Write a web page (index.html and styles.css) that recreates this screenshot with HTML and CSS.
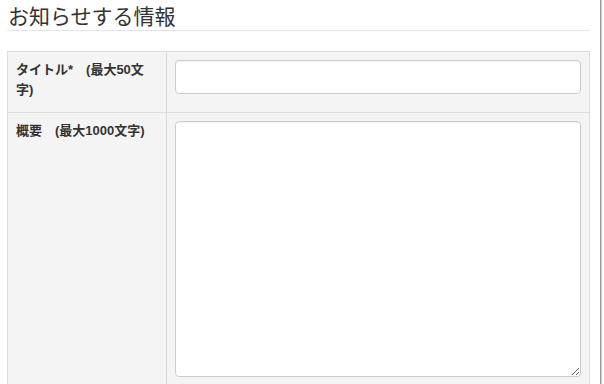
FILE: index.html
```html
<!DOCTYPE html>
<html lang="ja">
<head>
    <meta charset="UTF-8">
    <meta name="viewport" content="width=device-width, initial-scale=1.0">
    <title>お知らせする情報</title>
    <link rel="stylesheet" href="styles.css">
</head>
<body>

    <div class="page">
        <form class="notice-form">
            <fieldset>
                <legend>お知らせする情報</legend>

                <table class="form-table">
                    <tr>
                        <th>タイトル*　(最大50文字)</th>
                        <td><input type="text" class="field-input"></td>
                    </tr>
                    <tr>
                        <th>概要　(最大1000文字)</th>
                        <td><textarea class="field-textarea"></textarea></td>
                    </tr>
                </table>
            </fieldset>
        </form>
    </div>

    <!-- window edge on the right -->
    <div class="edge"></div>

</body>
</html>
```

FILE: styles.css
```css
* {
    box-sizing: border-box;
    margin: 0;
    padding: 0;
}

body {
    font-family: "Liberation Sans", "Noto Sans CJK JP", sans-serif;
    font-size: 13px;
    line-height: 20px;
    color: #333;
    background-color: #fff;
    display: flex;
    min-height: 100vh;
    overflow: hidden;
}

.page {
    width: 583px;
    margin-left: 7px;
}

fieldset {
    border: none;
}

legend {
    display: block;
    width: 100%;
    font-family: "Noto Sans CJK JP", sans-serif;
    font-size: 21px;
    font-weight: 400;
    line-height: 30px;
    padding-left: 1px;
    color: #333;
    border-bottom: 1px solid #e5e5e5;
    margin-bottom: 20px;
}

/* Form table */
.form-table {
    width: 100%;
    border-collapse: collapse;
    background-color: #f4f4f4;
}

.form-table th,
.form-table td {
    border: 1px solid #ddd;
    padding: 8px;
    vertical-align: top;
    text-align: left;
}

.form-table th {
    width: 159px;
    font-weight: bold;
    color: #333;
}

.field-input,
.field-textarea {
    display: block;
    width: 100%;
    border: 1px solid #ccc;
    border-radius: 4px;
    background-color: #fff;
    box-shadow: inset 0 1px 1px rgba(0, 0, 0, 0.05);
    font-size: 13px;
    padding: 6px 8px;
}

.field-input {
    height: 34px;
    margin-bottom: 10px;
}

.field-textarea {
    height: 256px;
    resize: vertical;
}

.edge {
    width: 2px;
    margin-left: 10px;
    background-color: #9a9a9a;
    border-right: 1px solid #ccc;
}
```
